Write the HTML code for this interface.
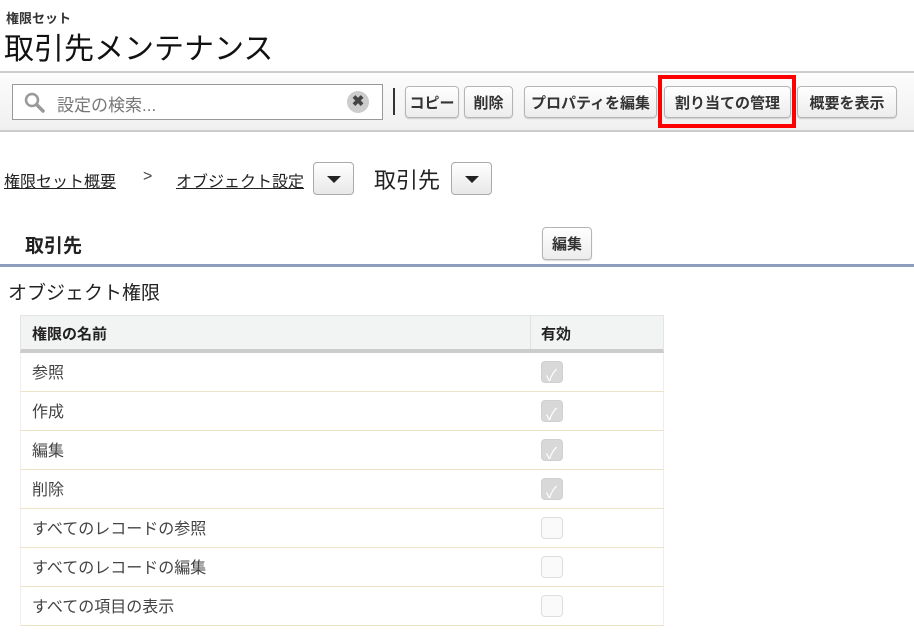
<!DOCTYPE html>
<html><head><meta charset="utf-8"><style>
*{margin:0;padding:0;box-sizing:border-box}
body{width:914px;height:640px;background:#fff;font-family:"Liberation Sans","Noto Sans CJK JP",sans-serif;color:#222;position:relative;overflow:hidden}
.a{position:absolute;white-space:nowrap}
.btn{position:absolute;height:32px;border:1px solid #b5b5b5;border-radius:4px;background:linear-gradient(#fff,#ececec);font-size:15px;font-weight:bold;color:#333;display:flex;align-items:center;justify-content:center;box-shadow:0 1px 1px rgba(0,0,0,.15)}
.dd{position:absolute;width:41px;height:33px;border:1px solid #aaa;border-radius:4px;background:linear-gradient(#fff,#e8e8e8)}
.dd:after{content:"";position:absolute;left:13px;top:13px;border-left:7px solid transparent;border-right:7px solid transparent;border-top:7px solid #222}
.row{position:absolute;left:20px;width:644px;height:39px;border-bottom:1px solid #ece3c4;border-left:1px solid #eee;border-right:1px solid #eee;font-size:16px;color:#444}
.row span{position:absolute;left:11px;top:6px}
.cb{position:absolute;left:520px;top:8px;width:22px;height:22px;border:1px solid #ddd;border-radius:4px;background:#fafafa}
.cb.on{background:#d8d8d8;border-color:#d0d0d0}
.cb.on:after{content:"✓";position:absolute;left:4px;top:0;color:#fff;font-size:16px}
</style></head><body>
<div class="a" style="left:6px;top:8px;font-size:13px;font-weight:bold;color:#333">権限セット</div>
<div class="a" style="left:4px;top:24px;font-size:30px;color:#111">取引先メンテナンス</div>
<div class="a" style="left:0;top:71px;width:914px;height:61px;border-top:2px solid #ccc;border-bottom:2px solid #ccc;background:linear-gradient(#fcfcfc,#f0f0f0)"></div>
<div class="a" style="left:12px;top:84px;width:371px;height:36px;border:1px solid #999;background:#fff"></div>
<svg class="a" style="left:24px;top:92px" width="22" height="22" viewBox="0 0 22 22"><circle cx="8" cy="8" r="6" fill="none" stroke="#999" stroke-width="2.5"/><line x1="12.5" y1="12.5" x2="19" y2="19" stroke="#999" stroke-width="3.5" stroke-linecap="round"/></svg>
<div class="a" style="left:57px;top:91px;font-size:17px;color:#777">設定の検索...</div>
<div class="a" style="left:347px;top:91px;width:22px;height:22px;border-radius:50%;background:#ccc;color:#444;font-size:15px;font-weight:bold;text-align:center;line-height:22px">✖</div>
<div class="a" style="left:393px;top:88px;width:2px;height:27px;background:#333"></div>
<div class="btn" style="left:405px;top:86px;width:54px">コピー</div>
<div class="btn" style="left:464px;top:86px;width:49px">削除</div>
<div class="btn" style="left:524px;top:86px;width:133px">プロパティを編集</div>
<div class="a" style="left:658px;top:75px;width:138px;height:53px;border:4px solid #f00"></div>
<div class="btn" style="left:664px;top:86px;width:127px">割り当ての管理</div>
<div class="btn" style="left:797px;top:86px;width:100px">概要を表示</div>
<div class="a" style="left:4px;top:168px;font-size:16px;text-decoration:underline;color:#222">権限セット概要</div>
<div class="a" style="left:143px;top:168px;font-size:16px;color:#444">&gt;</div>
<div class="a" style="left:176px;top:168px;font-size:16px;text-decoration:underline;color:#222">オブジェクト設定</div>
<div class="dd" style="left:313px;top:162px"></div>
<div class="a" style="left:374px;top:163px;font-size:22px;color:#222">取引先</div>
<div class="dd" style="left:451px;top:162px"></div>
<div class="a" style="left:25px;top:231px;font-size:19px;font-weight:bold;color:#222">取引先</div>
<div class="btn" style="left:542px;top:227px;width:50px;height:33px">編集</div>
<div class="a" style="left:0;top:264px;width:914px;height:3px;background:#8c9dbd"></div>
<div class="a" style="left:8px;top:278px;font-size:19px;color:#222">オブジェクト権限</div>
<div class="a" style="left:20px;top:315px;width:644px;height:38px;background:#f2f3f3;border:1px solid #e4e4e4;border-bottom:4px solid #ccc"></div>
<div class="a" style="left:530px;top:316px;width:1px;height:33px;background:#e0e0e0"></div>
<div class="a" style="left:32px;top:323px;font-size:15px;font-weight:bold;color:#222">権限の名前</div>
<div class="a" style="left:541px;top:323px;font-size:15px;font-weight:bold;color:#222">有効</div>
<div class="row" style="top:353px"><span>参照</span><div class="cb on"></div></div>
<div class="row" style="top:392px"><span>作成</span><div class="cb on"></div></div>
<div class="row" style="top:431px"><span>編集</span><div class="cb on"></div></div>
<div class="row" style="top:470px"><span>削除</span><div class="cb on"></div></div>
<div class="row" style="top:509px"><span>すべてのレコードの参照</span><div class="cb"></div></div>
<div class="row" style="top:548px"><span>すべてのレコードの編集</span><div class="cb"></div></div>
<div class="row" style="top:587px"><span>すべての項目の表示</span><div class="cb"></div></div>
</body></html>
